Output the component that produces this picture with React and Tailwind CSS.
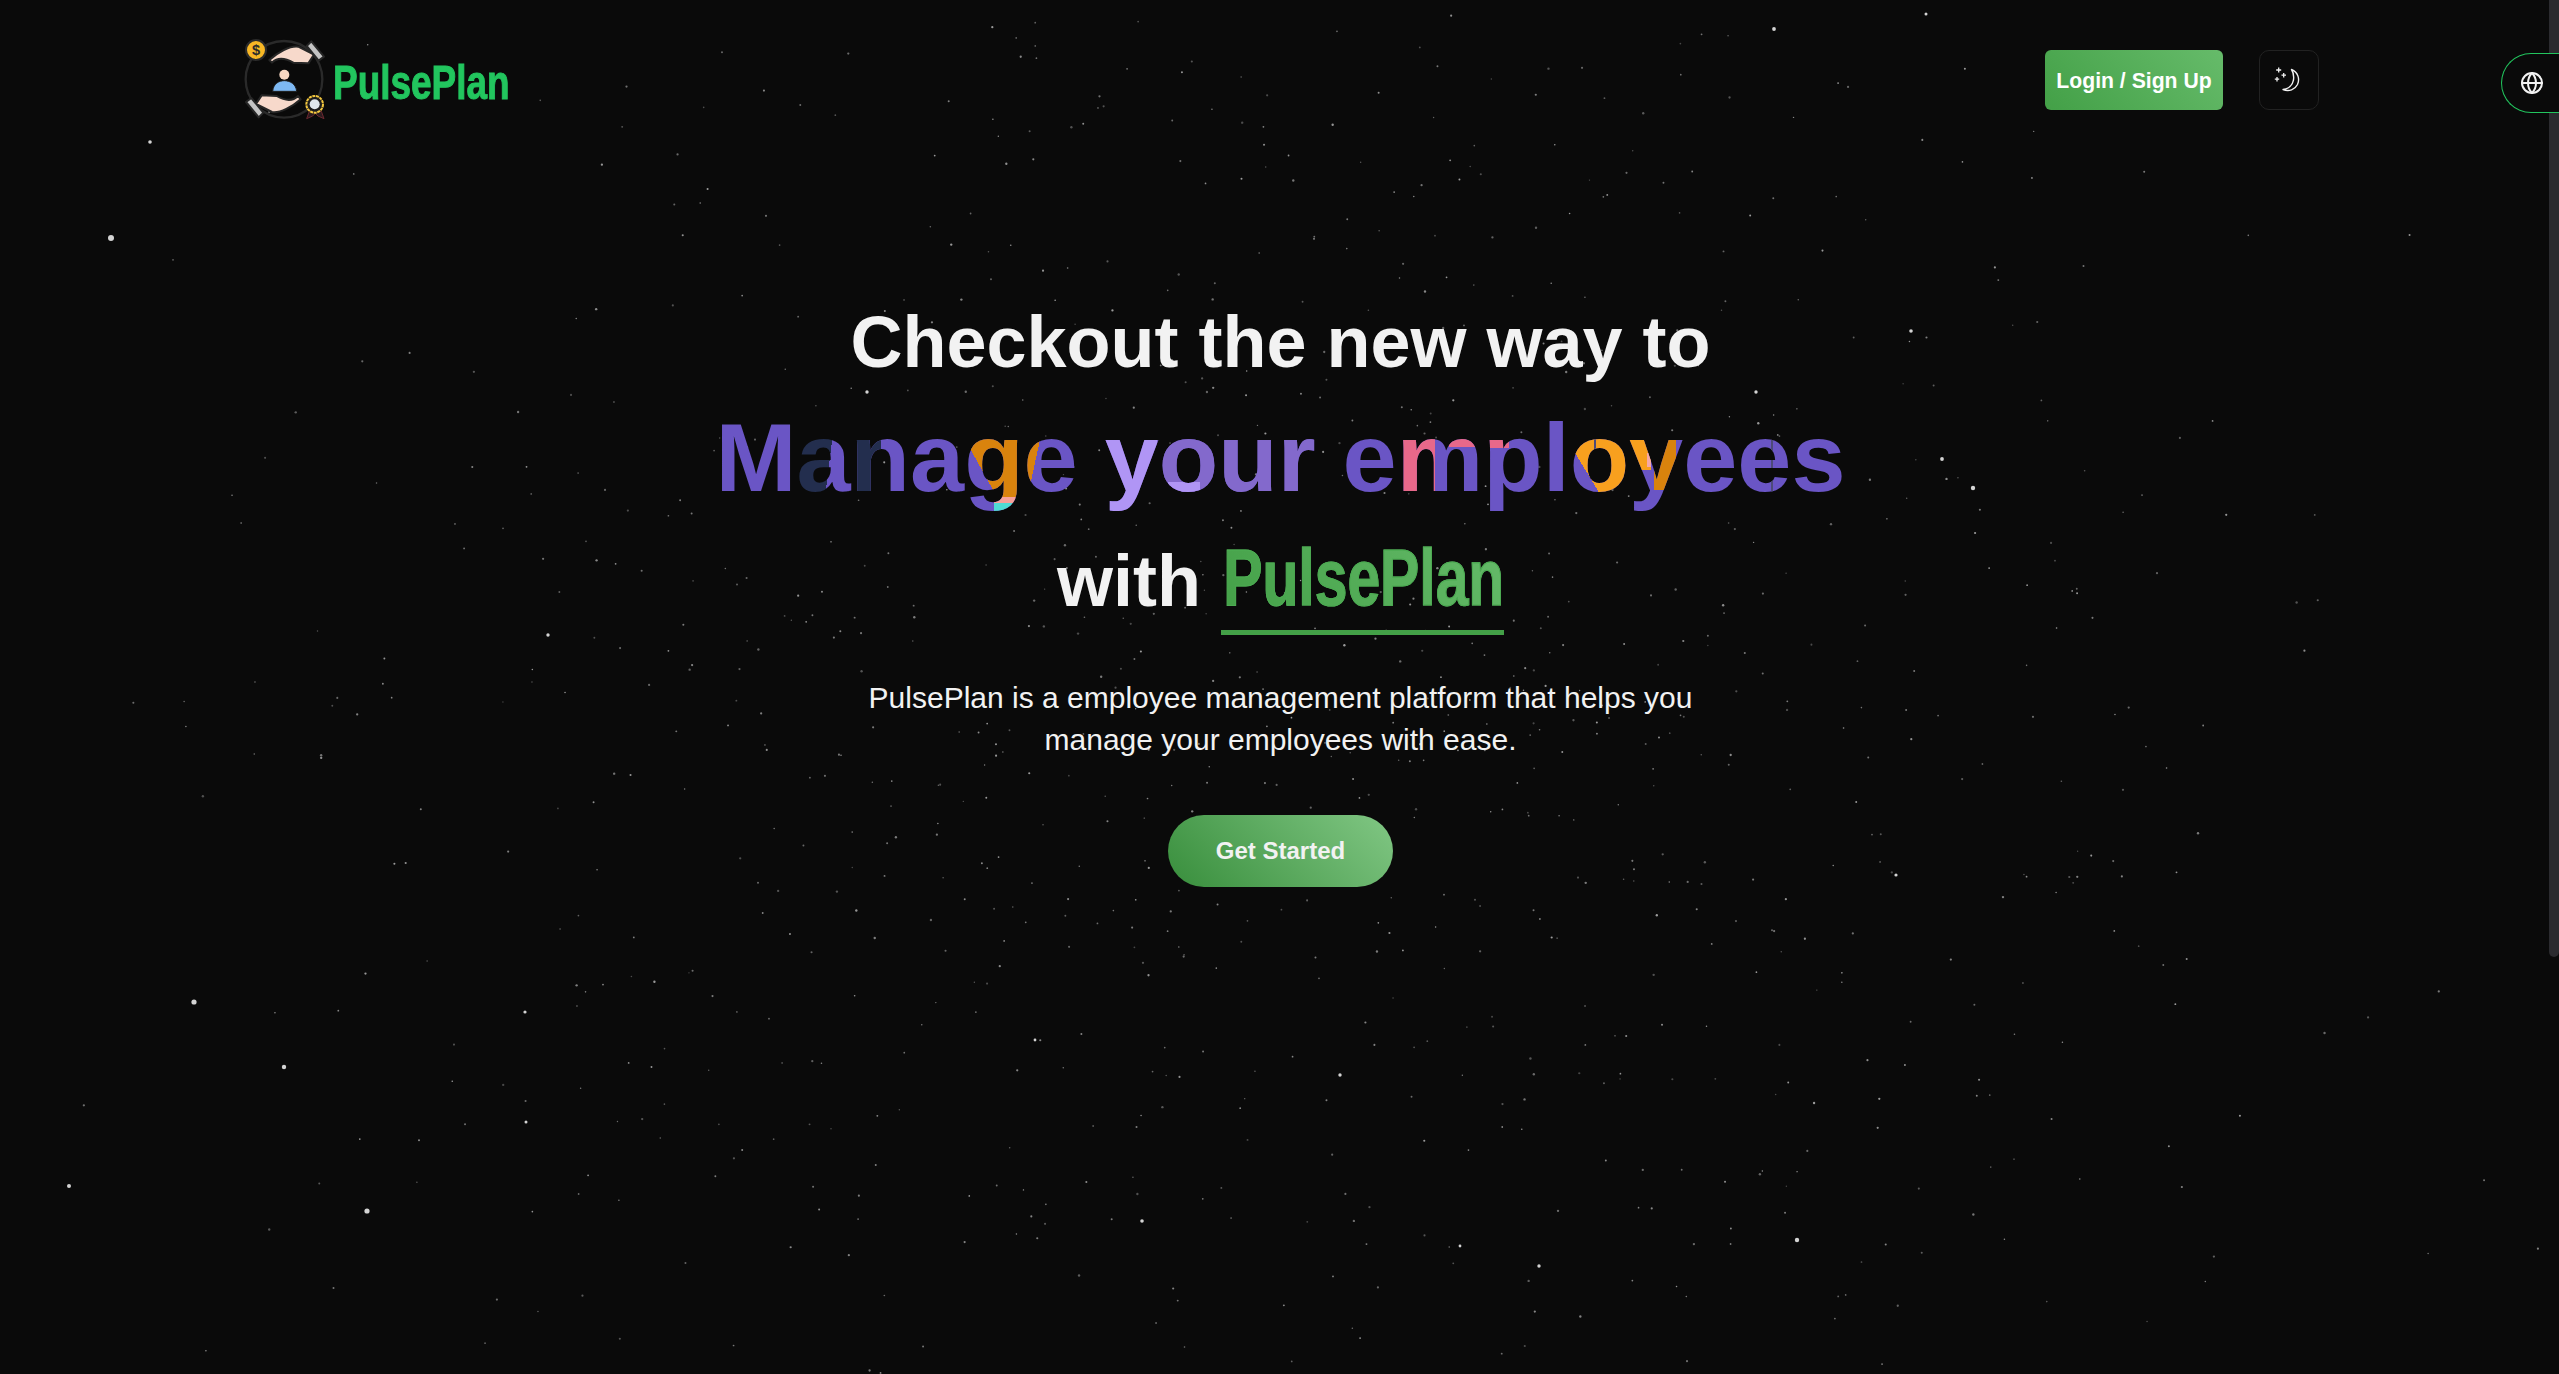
import React from "react";
import { Globe } from "lucide-react";

// seeded so the star field is the same on every load
const makeStars = () => {
  let seed = 20240611;
  const rnd = () => {
    seed = (seed * 1664525 + 1013904223) % 4294967296;
    return seed / 4294967296;
  };
  const stars = [];
  while (stars.length < 1000) {
    const x = rnd() * 2559;
    const y = rnd() * 1374;
    // denser round the middle of the page, thin at the edges
    const dx = (x - 1280) / 1280;
    const dy = (y - 720) / 720;
    const dist = Math.sqrt(dx * dx + dy * dy * 0.6);
    if (rnd() < Math.min(dist * 1.05, 0.97)) continue;
    stars.push({ x, y, r: 0.7 + rnd() * 0.5, o: 0.25 + rnd() * 0.35 });
  }
  return stars;
};

const stars = makeStars();

const brightStars = [
  [111, 238, 3], [150, 142, 1.8], [194, 1002, 2.6], [284, 1067, 2.2], [367, 1211, 2.6],
  [69, 1186, 2], [1973, 488, 2.2], [1942, 459, 1.9], [1911, 331, 1.8], [1774, 29, 1.9],
  [1797, 1240, 2.2], [1340, 1075, 1.7], [1142, 1221, 1.8], [1539, 1266, 1.7], [548, 635, 1.7],
  [525, 1012, 1.6], [1896, 875, 1.6], [526, 1122, 1.5], [1926, 14, 1.5], [1756, 392, 1.7],
  [867, 392, 1.7], [1035, 1040, 1.4], [1460, 1246, 1.4],
];

const StarField = () => (
  <svg className="absolute inset-0 w-full h-full blur-[0.5px]" viewBox="0 0 2559 1374">
    {stars.map((s, i) => (
      <circle key={i} cx={s.x} cy={s.y} r={s.r} fill="#fff" opacity={s.o} />
    ))}
    {brightStars.map(([x, y, r], i) => (
      <circle key={i} cx={x} cy={y} r={r} fill="#d4d4d4" />
    ))}
  </svg>
);

const Logo = () => (
  <svg width="90" height="88" viewBox="0 0 270 264" className="shrink-0">
    <circle cx="132" cy="130" r="115" fill="none" stroke="#2a2a2a" strokeWidth="7" />
    {/* coin */}
    <circle cx="48" cy="42" r="30" fill="#f8b725" stroke="#2b2b2b" strokeWidth="6" />
    <text x="48" y="58" textAnchor="middle" fontSize="44" fontWeight="700" fontFamily="Liberation Sans, sans-serif" fill="#2b2b2b">$</text>
    {/* top hand */}
    <path d="M88 72 C112 50 150 28 175 32 L222 56 L205 82 L160 80 C132 64 110 66 96 80 Z" fill="#f7d9cb" stroke="#262626" strokeWidth="6" strokeLinejoin="round" />
    <path d="M214 16 L252 62 L236 74 L200 30 Z" fill="#c4c4c4" stroke="#262626" strokeWidth="6" strokeLinejoin="round" />
    {/* person */}
    <circle cx="133" cy="116" r="15" fill="#f7d7c2" />
    <path d="M98 166 C100 142 118 134 133 134 C150 134 168 144 170 166 Z" fill="#7db8f3" stroke="#1f1f1f" strokeWidth="3" />
    {/* bottom hand */}
    <path d="M182 190 C158 212 120 232 96 228 L48 204 L65 178 L110 180 C138 196 160 194 174 180 Z" fill="#f7d9cb" stroke="#262626" strokeWidth="6" strokeLinejoin="round" />
    <path d="M56 244 L18 198 L34 186 L70 230 Z" fill="#c4c4c4" stroke="#262626" strokeWidth="6" strokeLinejoin="round" />
    {/* medal */}
    <path d="M208 226 L200 248 L218 240 L226 232 L234 240 L252 248 L244 226 Z" fill="#2a1c1f" stroke="#6b2730" strokeWidth="3" />
    <circle cx="224" cy="205" r="25" fill="#1d1d1d" stroke="#f3c73f" strokeWidth="6" strokeDasharray="9 2" />
    <circle cx="224" cy="205" r="15" fill="#dfe6ec" />
  </svg>
);

const MoonIcon = () => (
  <svg width="50" height="50" viewBox="0 0 50 50" fill="none" stroke="#f2f2f2" className="-ml-[2px]">
    <path d="M28.5 14.5 C35 17 37 24 34.5 29.5 C32 34.5 26 37 20 34.5 C25.5 34 29.5 30 30.5 25 C31 21 30.5 17.5 28.5 14.5 Z" strokeWidth="1.4" strokeLinejoin="round" />
    <path d="M15.7 12.5 V17.5 M13.2 15 H18.2 M20.7 18 V22.5 M18.5 20.2 H23 M14 22 V26.5 M11.8 24.2 H16.2" strokeWidth="1.3" />
  </svg>
);

export default function App() {
  return (
    <div className="relative h-screen overflow-hidden bg-[#0a0a0a] text-[#f2f2f2] font-['Liberation_Sans',Arial,sans-serif]">
      <StarField />

      {/* scrollbar thumb and language tab sit over the page */}
      <div className="absolute top-0 right-0 w-[10px] h-[957px] rounded-b-full bg-[#2b2b2f]" />
      <button className="absolute top-[53px] right-0 w-[58px] h-[60px] flex items-center pl-[18px] rounded-l-full border border-r-0 border-[#22c55e] bg-[#0a0a0a]">
        <Globe size={24} strokeWidth={2} color="#f2f2f2" />
      </button>

      <div className="relative">
        <nav className="h-[160px] px-[240px] flex items-center justify-between">
          <div className="flex items-center gap-[3px]">
            <Logo />
            <div className="w-[175px] pt-[6px] text-[48px] leading-[56px] font-bold text-[#22c55e] [-webkit-text-stroke:1px_#22c55e] origin-left scale-x-[0.77]">
              PulsePlan
            </div>
          </div>
          <div className="flex items-center gap-[36px]">
            <button className="w-[178px] h-[60px] pt-[2px] rounded-[6px] text-[21.2px] font-bold text-white bg-[linear-gradient(45deg,#43a047,#66bb6a)]">
              Login / Sign Up
            </button>
            <button className="w-[60px] h-[60px] rounded-[10px] border border-[#222] bg-[#0a0a0a] flex items-center justify-center">
              <MoonIcon />
            </button>
          </div>
        </nav>

        <main className="pt-[137px] pl-[2px] flex flex-col items-center text-center">
          <h1 className="text-[72px] leading-[90px] font-bold whitespace-nowrap">Checkout the new way to</h1>
          <div className="mt-[11px] inline-block text-[97.3px] leading-[120px] font-bold whitespace-nowrap text-transparent bg-clip-text bg-[#6a55c5] [background-repeat:no-repeat] [background-image:linear-gradient(#4d4a7a,#4d4a7a),linear-gradient(#4d4a7a,#4d4a7a),linear-gradient(#f5a8a8,#f5a8a8),linear-gradient(#d9830d,#d9830d),linear-gradient(#f8a01e,#f8a01e),linear-gradient(59deg,transparent_50%,#f8a01e_50%),linear-gradient(#f8a01e,#f8a01e),linear-gradient(#e8688a,#e8688a),linear-gradient(#e8688a,#e8688a),linear-gradient(#e8688a,#e8688a),linear-gradient(#b095f5,#b095f5),linear-gradient(#8369cc,#8369cc),linear-gradient(#b095f5,#b095f5),linear-gradient(102.5deg,#d9830d_50%,transparent_50%),linear-gradient(#f7a19a,#f7a19a),linear-gradient(#4fdcd4,#4fdcd4),linear-gradient(#d9830d,#d9830d),linear-gradient(61deg,transparent_50%,#d9830d_50%),linear-gradient(#232e4e,#232e4e),linear-gradient(97deg,#232e4e_50%,transparent_50%)] [background-size:2px_54px,2px_12px,4px_14px,22px_50px,23px_32px,34px_66px,25px_54px,20px_10px,28px_9px,35px_54px,32px_10px,162px_90px,54px_90px,27px_54px,25px_6px,25px_8px,25px_59px,23px_66px,27px_54px,70px_54px] [background-position:1056px_40px,879px_40px,932px_55px,939px_42px,913px_40px,854px_40px,888px_40px,774px_40px,734px_40px,685px_40px,453px_84px,442px_30px,388px_30px,306px_40px,279px_99px,279px_105px,279px_40px,256px_40px,139px_40px,79px_40px]">
            Manage your employees
          </div>
          <div className="mt-[18px] flex items-start gap-[20px]">
            <span className="text-[72px] leading-[90px] font-bold">with</span>
            <span className="block w-[283px] h-[99px] border-b-[5px] border-[#43a047] text-left">
              <span className="block w-max pl-[3px] text-[80px] leading-[84px] font-bold text-transparent bg-clip-text bg-[linear-gradient(45deg,#43a047,#66bb6a)] [-webkit-text-stroke:1.2px_#4cab52] origin-left scale-x-[0.735]">
                PulsePlan
              </span>
            </span>
          </div>
          <p className="mt-[42px] text-[30px] leading-[42px]">
            PulsePlan is a employee management platform that helps you
            <br />
            manage your employees with ease.
          </p>
          <button className="mt-[54px] w-[225px] h-[72px] rounded-full text-[24px] font-bold bg-[linear-gradient(45deg,#388e3c,#81c784)]">
            Get Started
          </button>
        </main>
      </div>
    </div>
  );
}
